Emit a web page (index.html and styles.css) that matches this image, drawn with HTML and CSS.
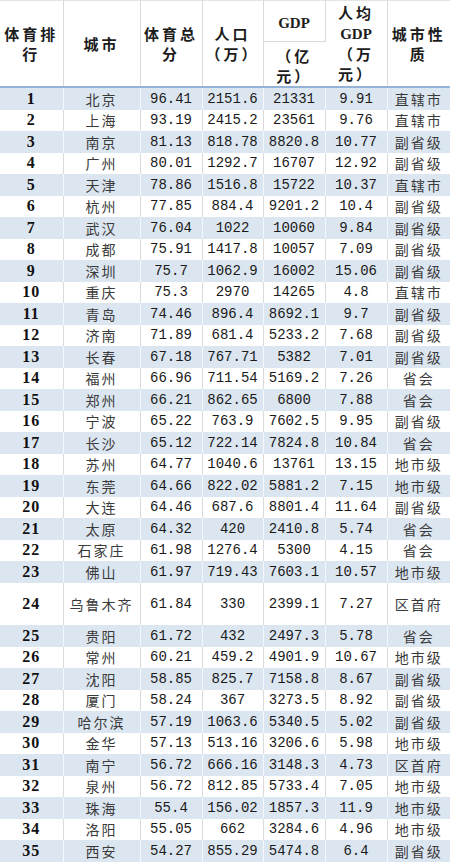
FILE: index.html
```html
<!DOCTYPE html>
<html lang="zh-CN">
<head>
<meta charset="utf-8">
<title>体育排行</title>
<link rel="stylesheet" href="styles.css">
</head>
<body>
<table class="rank">
  <colgroup>
    <col class="c1"><col class="c2"><col class="c3"><col class="c4"><col class="c5"><col class="c6"><col class="c7">
  </colgroup>
  <thead>
    <tr class="h-top">
      <th rowspan="2">体育排<br>行</th>
      <th rowspan="2">城市</th>
      <th rowspan="2">体育总<br>分</th>
      <th rowspan="2">人口<br>（万）</th>
      <th class="gdp-top"><span class="lat">GDP</span></th>
      <th rowspan="2">人均<br><span class="lat">GDP</span><br>（万<br>元）</th>
      <th rowspan="2">城市性<br>质</th>
    </tr>
    <tr class="h-bot">
      <th class="gdp-bot">（亿<br>元）</th>
    </tr>
  </thead>
  <tbody>
    <tr><td>1</td><td>北京</td><td>96.41</td><td>2151.6</td><td>21331</td><td>9.91</td><td>直辖市</td></tr>
    <tr><td>2</td><td>上海</td><td>93.19</td><td>2415.2</td><td>23561</td><td>9.76</td><td>直辖市</td></tr>
    <tr><td>3</td><td>南京</td><td>81.13</td><td>818.78</td><td>8820.8</td><td>10.77</td><td>副省级</td></tr>
    <tr><td>4</td><td>广州</td><td>80.01</td><td>1292.7</td><td>16707</td><td>12.92</td><td>副省级</td></tr>
    <tr><td>5</td><td>天津</td><td>78.86</td><td>1516.8</td><td>15722</td><td>10.37</td><td>直辖市</td></tr>
    <tr><td>6</td><td>杭州</td><td>77.85</td><td>884.4</td><td>9201.2</td><td>10.4</td><td>副省级</td></tr>
    <tr><td>7</td><td>武汉</td><td>76.04</td><td>1022</td><td>10060</td><td>9.84</td><td>副省级</td></tr>
    <tr><td>8</td><td>成都</td><td>75.91</td><td>1417.8</td><td>10057</td><td>7.09</td><td>副省级</td></tr>
    <tr><td>9</td><td>深圳</td><td>75.7</td><td>1062.9</td><td>16002</td><td>15.06</td><td>副省级</td></tr>
    <tr><td>10</td><td>重庆</td><td>75.3</td><td>2970</td><td>14265</td><td>4.8</td><td>直辖市</td></tr>
    <tr><td>11</td><td>青岛</td><td>74.46</td><td>896.4</td><td>8692.1</td><td>9.7</td><td>副省级</td></tr>
    <tr><td>12</td><td>济南</td><td>71.89</td><td>681.4</td><td>5233.2</td><td>7.68</td><td>副省级</td></tr>
    <tr><td>13</td><td>长春</td><td>67.18</td><td>767.71</td><td>5382</td><td>7.01</td><td>副省级</td></tr>
    <tr><td>14</td><td>福州</td><td>66.96</td><td>711.54</td><td>5169.2</td><td>7.26</td><td>省会</td></tr>
    <tr><td>15</td><td>郑州</td><td>66.21</td><td>862.65</td><td>6800</td><td>7.88</td><td>省会</td></tr>
    <tr><td>16</td><td>宁波</td><td>65.22</td><td>763.9</td><td>7602.5</td><td>9.95</td><td>副省级</td></tr>
    <tr><td>17</td><td>长沙</td><td>65.12</td><td>722.14</td><td>7824.8</td><td>10.84</td><td>省会</td></tr>
    <tr><td>18</td><td>苏州</td><td>64.77</td><td>1040.6</td><td>13761</td><td>13.15</td><td>地市级</td></tr>
    <tr><td>19</td><td>东莞</td><td>64.66</td><td>822.02</td><td>5881.2</td><td>7.15</td><td>地市级</td></tr>
    <tr><td>20</td><td>大连</td><td>64.46</td><td>687.6</td><td>8801.4</td><td>11.64</td><td>副省级</td></tr>
    <tr><td>21</td><td>太原</td><td>64.32</td><td>420</td><td>2410.8</td><td>5.74</td><td>省会</td></tr>
    <tr><td>22</td><td>石家庄</td><td>61.98</td><td>1276.4</td><td>5300</td><td>4.15</td><td>省会</td></tr>
    <tr><td>23</td><td>佛山</td><td>61.97</td><td>719.43</td><td>7603.1</td><td>10.57</td><td>地市级</td></tr>
    <tr class="tall"><td>24</td><td>乌鲁木齐</td><td>61.84</td><td>330</td><td>2399.1</td><td>7.27</td><td>区首府</td></tr>
    <tr><td>25</td><td>贵阳</td><td>61.72</td><td>432</td><td>2497.3</td><td>5.78</td><td>省会</td></tr>
    <tr><td>26</td><td>常州</td><td>60.21</td><td>459.2</td><td>4901.9</td><td>10.67</td><td>地市级</td></tr>
    <tr><td>27</td><td>沈阳</td><td>58.85</td><td>825.7</td><td>7158.8</td><td>8.67</td><td>副省级</td></tr>
    <tr><td>28</td><td>厦门</td><td>58.24</td><td>367</td><td>3273.5</td><td>8.92</td><td>副省级</td></tr>
    <tr><td>29</td><td>哈尔滨</td><td>57.19</td><td>1063.6</td><td>5340.5</td><td>5.02</td><td>副省级</td></tr>
    <tr><td>30</td><td>金华</td><td>57.13</td><td>513.16</td><td>3206.6</td><td>5.98</td><td>地市级</td></tr>
    <tr><td>31</td><td>南宁</td><td>56.72</td><td>666.16</td><td>3148.3</td><td>4.73</td><td>区首府</td></tr>
    <tr><td>32</td><td>泉州</td><td>56.72</td><td>812.85</td><td>5733.4</td><td>7.05</td><td>地市级</td></tr>
    <tr><td>33</td><td>珠海</td><td>55.4</td><td>156.02</td><td>1857.3</td><td>11.9</td><td>地市级</td></tr>
    <tr><td>34</td><td>洛阳</td><td>55.05</td><td>662</td><td>3284.6</td><td>4.96</td><td>地市级</td></tr>
    <tr><td>35</td><td>西安</td><td>54.27</td><td>855.29</td><td>5474.8</td><td>6.4</td><td>副省级</td></tr>
  </tbody>
</table>
</body>
</html>
```
FILE: styles.css
```css
html, body {
  margin: 0;
  padding: 0;
  background: #ffffff;
}

.rank {
  width: 450px;
  table-layout: fixed;
  border-collapse: collapse;
  border-spacing: 0;
  font-family: "Liberation Mono", monospace;
  color: #1a1a1a;
}

.c1 { width: 63px; }
.c2 { width: 77px; }
.c3 { width: 62px; }
.c4 { width: 61px; }
.c5 { width: 62px; }
.c6 { width: 62px; }
.c7 { width: 63px; }

.rank th {
  padding: 0;
  background: #ffffff;
  font-family: "Noto Sans CJK SC", sans-serif;
  font-weight: 700;
  font-size: 15px;
  letter-spacing: 3px;
  line-height: 20px;
  color: #1c1c1c;
  text-align: center;
  vertical-align: middle;
  border-right: 1px solid #dadada;
  border-top: 1px solid #e4e4e4;
  border-bottom: 2px solid #95b3d7;
}

.rank th:last-child {
  border-right: none;
}

.rank .h-top th {
  height: 40px;
}

.rank .h-top th.gdp-top {
  height: 38px;
  padding-top: 2px;
  border-bottom: 1px solid #dadada;
}

.rank .h-bot th {
  height: 39px;
  padding-top: 4px;
}

.rank .lat {
  font-family: "Liberation Serif", serif;
  font-weight: 700;
  font-size: 15px;
  letter-spacing: 0;
}

.rank td {
  height: 21.5px;
  padding: 0;
  text-align: center;
  vertical-align: middle;
  font-size: 14px;
  line-height: 18px;
  letter-spacing: 0;
  white-space: nowrap;
  border-right: 1px solid #dadada;
}

.rank td:last-child {
  border-right: none;
}

.rank tbody tr:nth-child(odd) td {
  background: #dce6f1;
  border-right-color: #f4f7fb;
}

.rank tbody tr:last-child td {
  border-bottom: 2px solid #95b3d7;
}

.rank td:first-child {
  font-family: "Liberation Serif", serif;
  font-weight: 700;
  font-size: 16px;
  letter-spacing: 1px;
  color: #111111;
}

.rank td:nth-child(2),
.rank td:last-child {
  font-family: "Noto Sans CJK SC", sans-serif;
  font-size: 14px;
  letter-spacing: 2px;
  color: #3a3a3a;
}

.rank tr.tall td {
  height: 42.5px;
}
```
